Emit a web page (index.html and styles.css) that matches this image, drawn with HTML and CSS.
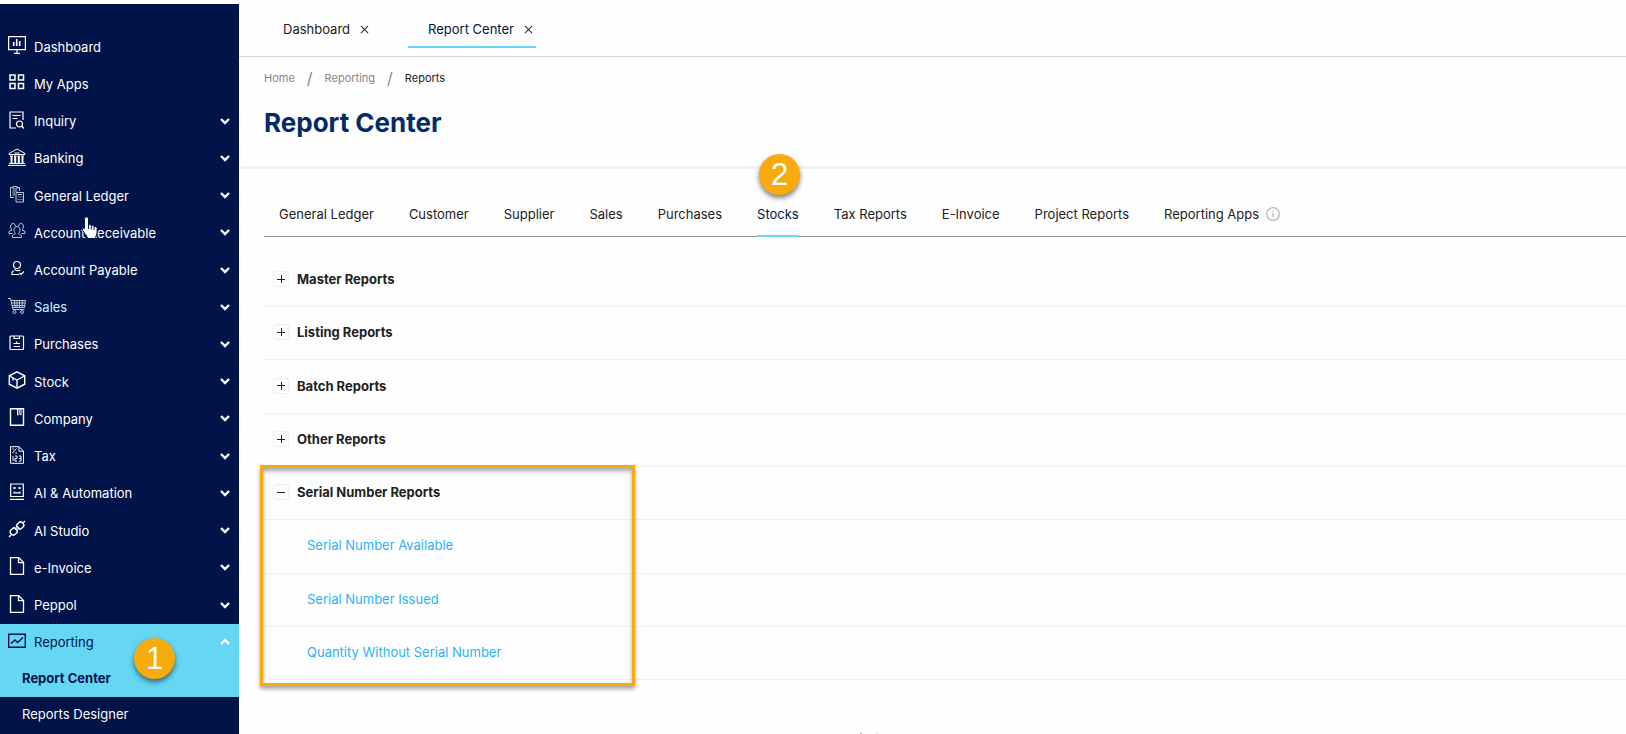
FILE: index.html
```html
<!DOCTYPE html>
<html lang="en">
<head>
    <meta charset="UTF-8">
    <title>Report Center</title>
    <link rel="stylesheet" href="styles.css">
</head>
<body>
    <!-- shared shapes -->
    <svg class="defs" aria-hidden="true">
        <symbol id="chevron" viewBox="0 0 10 8"><path d="M1 2l4 4 4-4" fill="none" stroke="currentColor" stroke-width="2.4"/></symbol>
        <symbol id="cross" viewBox="0 0 10 10"><path d="M1 1l8 8M9 1l-8 8" fill="none" stroke="currentColor" stroke-width="1.2"/></symbol>
        <symbol id="file" viewBox="0 0 18 18"><path d="M2.5.7h8.300l4.700 4.700v11.900h-13zM10.500 1v4.700h4.800" fill="none" stroke="currentColor" stroke-width="1.300"/></symbol>
    </svg>

    <div class="app">
        <aside class="sidebar">
            <nav class="menu">
                <a class="menu-item" href="#">
                    <svg class="icon" viewBox="0 0 18 18"><path d="M.6.6h16.800v13H.6zM9 13.600v3.400M6 17.400h6"/><path d="M5.700 6v4M8.700 3v7M11.700 5v5" stroke-width="1.600"/></svg>
                    <span>Dashboard</span>
                </a>
                <a class="menu-item" href="#">
                    <svg class="icon" viewBox="0 0 18 18"><path d="M2 2h5v5H2zM10.500 2h5v5h-5zM2 10.500h5v5H2zM10.500 10.500h5v5h-5z" stroke-width="1.500"/></svg>
                    <span>My Apps</span>
                </a>
                <button class="menu-item">
                    <svg class="icon" viewBox="0 0 18 18"><path d="M8 17H2V1h13v8M4.500 4.500h8M4.500 7.500h5"/><circle cx="11.500" cy="13" r="3"/><path d="M13.500 15l2.500 2.500"/></svg>
                    <span>Inquiry</span>
                    <svg class="chevron"><use href="#chevron"/></svg>
                </button>
                <button class="menu-item">
                    <svg class="icon" viewBox="0 0 18 18"><path d="M1 5.500L9 1l8 4.500v1H1zM6.500 5h5M1 15.500h16M0 17.400h18M2 8h3M6 8h2.500M9.500 8H12M13 8h3" stroke-width="1"/><path d="M3.500 8v7M7.200 8v7M10.800 8v7M14.500 8v7" stroke-width="2"/></svg>
                    <span>Banking</span>
                    <svg class="chevron"><use href="#chevron"/></svg>
                </button>
                <button class="menu-item">
                    <svg class="icon thin" viewBox="0 0 18 18"><path d="M6 12.500H2.500v-10H5M9 2.500h2.500V6M5 1.500h4v2.500H5zM4.500 6h5M4.500 8h2.500M4.500 10h2.500M8 7.500h7.500v9.500H8zM9.500 9.500h4.500M9.500 12h1M11.500 12h1M13.500 12h1M9.500 14.500h1M11.500 14.500h1M13.500 14.500h1"/></svg>
                    <span>General Ledger</span>
                    <svg class="chevron"><use href="#chevron"/></svg>
                </button>
                <button class="menu-item">
                    <svg class="icon thin" viewBox="0 0 18 18"><path d="M4.500 15.500v-2l3-2c-2.500-2.500-1.800-7 1.500-7s4 4.500 1.500 7l3 2v2zM4.500 11.500H1v-2l3-1.500C2 6 2 1.500 5 1.500c1.500 0 2.200 1 2.400 2.500M13.500 11.500H17v-2l-3-1.500c2-2 2-6.500-1-6.500-1.500 0-2.200 1-2.400 2.500"/></svg>
                    <span>Account Receivable</span>
                    <svg class="chevron"><use href="#chevron"/></svg>
                    <svg class="pointer" viewBox="0 0 18 24"><path d="M5.500 1c1.500 0 2 1 2 2v6c1-1 2.500-.5 2.800.8 1-1 2.500-.4 2.800.9 1-.8 3 0 3 1.600V16c0 3-1.500 3.500-1.500 6.500H6.500C6 19 3.500 18 1.500 14c-.7-1.700 1-2.800 2-1.500V3c0-1 .5-2 2-2z" fill="#fff" stroke="#001449"/><path d="M7.500 9v4M10.300 10v3.500M13.100 11v3" stroke="#001449"/></svg>
                </button>
                <button class="menu-item">
                    <svg class="icon" viewBox="0 0 18 18"><circle cx="9" cy="5" r="3.500"/><path d="M5.500 10.500C3.500 12 4 14.500 4 14.500h7M6.500 9.500c3 2 5 1 6 .5M11.500 13l1.500 1.500 3-3"/></svg>
                    <span>Account Payable</span>
                    <svg class="chevron"><use href="#chevron"/></svg>
                </button>
                <button class="menu-item hovered">
                    <svg class="icon thin" viewBox="0 0 18 18"><path d="M0 1.500h2.500L5 12.500h11.500M3 3.500h14.500L16.500 10.500H4.500M3.500 6h13.500M4 8.500h13M6.500 3.500l.5 7M9 3.500v7M11.500 3.500v7M14.500 3.500l-.5 7"/><circle cx="6.500" cy="15" r="1.500"/><circle cx="14" cy="15" r="1.500"/></svg>
                    <span>Sales</span>
                    <svg class="chevron"><use href="#chevron"/></svg>
                </button>
                <button class="menu-item">
                    <svg class="icon" viewBox="0 0 18 18"><rect x="2" y="2" width="13.500" height="13.500" rx="1"/><path d="M6 2v2.500h5.500V2M5.500 9.500h6.500M5.500 12.500h6.500M8.700 7.500v2"/></svg>
                    <span>Purchases</span>
                    <svg class="chevron"><use href="#chevron"/></svg>
                </button>
                <button class="menu-item">
                    <svg class="icon" viewBox="0 0 18 18"><path d="M9 .8l7.700 4v8.400L9 17.200l-7.700-4V4.800zM1.500 5L9 9l7.500-4M9 9v8M5 7v2.500" stroke-width="1.400"/></svg>
                    <span>Stock</span>
                    <svg class="chevron"><use href="#chevron"/></svg>
                </button>
                <button class="menu-item">
                    <svg class="icon" viewBox="0 0 18 18"><path d="M2.500.7h13v16.600h-13z" stroke-width="1.400"/><path d="M9.500 1v6l1.700-1.500L13 7V1M11.200 1v4" stroke-width="1"/></svg>
                    <span>Company</span>
                    <svg class="chevron"><use href="#chevron"/></svg>
                </button>
                <button class="menu-item">
                    <svg class="icon" viewBox="0 0 18 18"><path d="M2.500.7h8.500l4.500 4.500v12.100h-13zM11 .7v4.500h4.500M4.500 7l4-4.500M4.500 3h1.500M7.500 7H9M5 10v5M7 10h2v2.500H7V15h2M11 10h2v5h-2M11 12.500h2" stroke-width="1"/></svg>
                    <span>Tax</span>
                    <svg class="chevron"><use href="#chevron"/></svg>
                </button>
                <button class="menu-item">
                    <svg class="icon" viewBox="0 0 18 18"><path d="M2.700 1h12.600v12.500H2.700zM2 16.400h14M6 8.500v1.300h6V8.500"/><path d="M5.500 5h2M10.500 5h2" stroke-width="2"/></svg>
                    <span>AI &amp; Automation</span>
                    <svg class="chevron"><use href="#chevron"/></svg>
                </button>
                <button class="menu-item">
                    <svg class="icon" viewBox="0 0 18 18"><g stroke-width="1.400"><rect x="-3" y="-3.500" width="6" height="7" rx="2.500" transform="translate(5.800 11.500) rotate(45)"/><rect x="-3" y="-3.500" width="6" height="7" rx="2.500" transform="translate(12.200 5.500) rotate(45)"/><path d="M1 17l2.500-2.500M14.500 3.500L17 1M7 8.500l2 2M9 6.500l2.500 2.500"/></g></svg>
                    <span>AI Studio</span>
                    <svg class="chevron"><use href="#chevron"/></svg>
                </button>
                <button class="menu-item">
                    <svg class="icon"><use href="#file"/></svg>
                    <span>e-Invoice</span>
                    <svg class="chevron"><use href="#chevron"/></svg>
                </button>
                <button class="menu-item">
                    <svg class="icon"><use href="#file"/></svg>
                    <span>Peppol</span>
                    <svg class="chevron"><use href="#chevron"/></svg>
                </button>
                <button class="menu-item open" aria-expanded="true">
                    <svg class="icon" viewBox="0 0 18 18"><path d="M.7 2.200h16.600v13H.7zM3 11.500l4-3.500 2.500 2.500L15 5.500" stroke-width="1.400"/></svg>
                    <span>Reporting</span>
                    <svg class="chevron"><use href="#chevron"/></svg>
                    <span class="badge badge-menu">1</span>
                </button>
            </nav>
            <div class="submenu">
                <a class="submenu-item active" href="#">Report Center</a>
                <a class="submenu-item" href="#">Reports Designer</a>
            </div>
        </aside>

        <main class="main">
            <header class="page-tabs">
                <div class="page-tab">
                    <a href="#">Dashboard</a>
                    <button class="close" aria-label="Close Dashboard"><svg><use href="#cross"/></svg></button>
                </div>
                <div class="page-tab active">
                    <a href="#">Report Center</a>
                    <button class="close" aria-label="Close Report Center"><svg><use href="#cross"/></svg></button>
                </div>
            </header>

            <div class="page-head">
                <nav class="breadcrumb">
                    <a href="#">Home</a><span class="slash">/</span><a href="#">Reporting</a><span class="slash">/</span><span class="current">Reports</span>
                </nav>
                <h1>Report Center</h1>
            </div>

            <section class="content">
                <div class="report-tabs">
                    <button class="report-tab">General Ledger</button>
                    <button class="report-tab">Customer</button>
                    <button class="report-tab">Supplier</button>
                    <button class="report-tab">Sales</button>
                    <button class="report-tab">Purchases</button>
                    <button class="report-tab active">Stocks<span class="badge badge-tab">2</span></button>
                    <button class="report-tab">Tax Reports</button>
                    <button class="report-tab">E-Invoice</button>
                    <button class="report-tab">Project Reports</button>
                    <button class="report-tab">Reporting Apps
                        <svg class="info" viewBox="0 0 14 14"><circle cx="7" cy="7" r="6.300" fill="none" stroke="#b5b5b5" stroke-width="1.200"/><path d="M7 6v4.500M7 3.500v1.300" stroke="#b5b5b5" stroke-width="1.300"/></svg>
                    </button>
                </div>

                <div class="reports">
                    <table class="report-table">
                        <tbody>
                            <tr><td><button class="toggle" aria-label="Expand Master Reports"></button><b>Master Reports</b></td></tr>
                            <tr><td><button class="toggle" aria-label="Expand Listing Reports"></button><b>Listing Reports</b></td></tr>
                            <tr><td><button class="toggle" aria-label="Expand Batch Reports"></button><b>Batch Reports</b></td></tr>
                            <tr><td><button class="toggle" aria-label="Expand Other Reports"></button><b>Other Reports</b></td></tr>
                            <tr><td><button class="toggle minus" aria-label="Collapse Serial Number Reports"></button><b>Serial Number Reports</b></td></tr>
                            <tr><td class="child"><a href="#">Serial Number Available</a></td></tr>
                            <tr><td class="child"><a href="#">Serial Number Issued</a></td></tr>
                            <tr><td class="child"><a href="#">Quantity Without Serial Number</a></td></tr>
                        </tbody>
                    </table>
                    <div class="highlight"></div>
                </div>
            </section>

            <footer class="footer">Copyright © 2010-2024</footer>
        </main>
    </div>
</body>
</html>
```
FILE: styles.css
```css
* {
    box-sizing: border-box;
}
body {
    margin: 0;
    font-family: Inter, sans-serif;
    font-size: 13px;
    color: #222;
    background: #fefefe;
}
a {
    color: inherit;
    text-decoration: none;
}
button {
    padding: 0;
    border: none;
    background: none;
    font: inherit;
    color: inherit;
    cursor: pointer;
}
.defs {
    position: absolute;
    width: 0;
    height: 0;
}
.app {
    display: flex;
    height: 100vh;
    overflow: hidden;
}

/* sidebar */
.sidebar {
    display: flex;
    flex-direction: column;
    flex: none;
    width: 239px;
    margin-top: 4px;
    padding-top: 24px;
    background: #001449;
    color: #fff;
}
.menu {
    display: flex;
    flex-direction: column;
    flex: 1;
}
.menu-item {
    position: relative;
    display: flex;
    align-items: center;
    flex: 1;
    padding: 0 9px 0 8px;
    text-align: left;
}
.menu-item > span:not(.badge) {
    flex: 1;
}
.menu-item.open {
    background: #65d6f4;
    color: #001449;
}
.menu-item.hovered > span {
    color: #c9effb;
}
.icon {
    width: 18px;
    height: 18px;
    margin: 0 8px 3px 0;
    fill: none;
    stroke: currentColor;
    stroke-width: 1.2;
}
.icon.thin {
    stroke-width: 1;
    opacity: 0.75;
}
.chevron {
    width: 10px;
    height: 8px;
    margin-bottom: 1px;
    color: #fff;
}
.open .chevron {
    transform: rotate(180deg);
}
.pointer {
    position: absolute;
    left: 81px;
    top: 2px;
    width: 18px;
    height: 24px;
    fill: none;
}
.submenu {
    padding-bottom: 1px;
}
.submenu-item {
    display: block;
    height: 36px;
    padding-left: 22px;
    line-height: 34px;
}
.submenu-item.active {
    background: #65d6f4;
    color: #001449;
    font-weight: bold;
}

/* numbered markers */
.badge {
    position: absolute;
    z-index: 1;
    width: 41px;
    height: 41px;
    border-radius: 50%;
    background: #f8ab0d;
    box-shadow: 0 3px 5px rgba(0,0,0,0.5);
    color: #fff;
    font: 31px/41px "Liberation Sans", sans-serif;
    text-align: center;
}
.badge-menu {
    left: 134px;
    top: 14px;
}
.badge-tab {
    left: 2px;
    bottom: 40px;
}

/* open pages */
.main {
    flex: 1;
    min-width: 0;
}
.page-tabs {
    display: flex;
    gap: 36px;
    height: 57px;
    padding: 10px 24px 0;
    border-bottom: 1px solid #d8d8d8;
}
.page-tab {
    display: flex;
    align-items: center;
    gap: 10px;
    height: 38px;
    padding: 2px 3px 0 20px;
    border-bottom: 2px solid transparent;
}
.page-tab.active {
    border-color: #65d6f4;
    color: #001449;
}
.close {
    color: #333;
}
.close svg {
    display: block;
    width: 9px;
    height: 9px;
}

.page-head {
    padding: 9px 25px 26px;
    border-bottom: 3px solid #f2f2f2;
}
.breadcrumb {
    display: flex;
    align-items: center;
    height: 24px;
    font-size: 11px;
    color: #888;
}
.slash {
    margin: 0 12px;
    font-size: 16px;
}
.current {
    color: #222;
}
h1 {
    margin: 16px 0 0;
    font-size: 26px;
    line-height: 34px;
    color: #032b69;
}

/* report list */
.content {
    padding-left: 25px;
}
.report-tabs {
    display: flex;
    gap: 35px;
    margin-top: 28px;
    padding-left: 15px;
    border-bottom: 1px solid #949494;
}
.report-tab {
    position: relative;
    display: flex;
    align-items: center;
    height: 40px;
    margin-bottom: -1px;
    padding-bottom: 4px;
    border-bottom: 2px solid transparent;
    white-space: nowrap;
}
.report-tab.active {
    border-color: #65d6f4;
    color: #001449;
}
.info {
    width: 14px;
    height: 14px;
    margin-left: 7px;
}
.reports {
    position: relative;
    margin-top: 17px;
}
.report-table {
    width: 100%;
    border-spacing: 0;
}
.report-table td {
    height: 53px;
    padding: 0 9px 3px;
    border-bottom: 1px solid #efefef;
}
.report-table tr:nth-child(3n) td {
    height: 54px;
}
.report-table tr:last-child td {
    border-bottom-left-radius: 8px;
}
.report-table td.child {
    padding-left: 43px;
    color: #2db2fa;
}
.report-table b {
    margin-left: 8px;
    vertical-align: middle;
}
.toggle {
    width: 16px;
    height: 16px;
    border: 1px solid #f0f0f0;
    border-radius: 2px;
    vertical-align: middle;
    background:
        linear-gradient(#222, #222) center / 8px 1px no-repeat,
        linear-gradient(#222, #222) center / 1px 8px no-repeat;
}
.toggle.minus {
    background: linear-gradient(#222, #222) center / 8px 1px no-repeat;
}
.highlight {
    position: absolute;
    left: -4px;
    bottom: -6px;
    width: 375px;
    height: 221px;
    border: 3px solid #f9ab0c;
    box-shadow: 0 3px 4px rgba(0,0,0,0.35), inset 0 3px 4px rgba(0,0,0,0.35);
    pointer-events: none;
}
.footer {
    margin-top: 51px;
    padding-left: 589px;
    font-size: 11px;
    color: #888;
}
```
